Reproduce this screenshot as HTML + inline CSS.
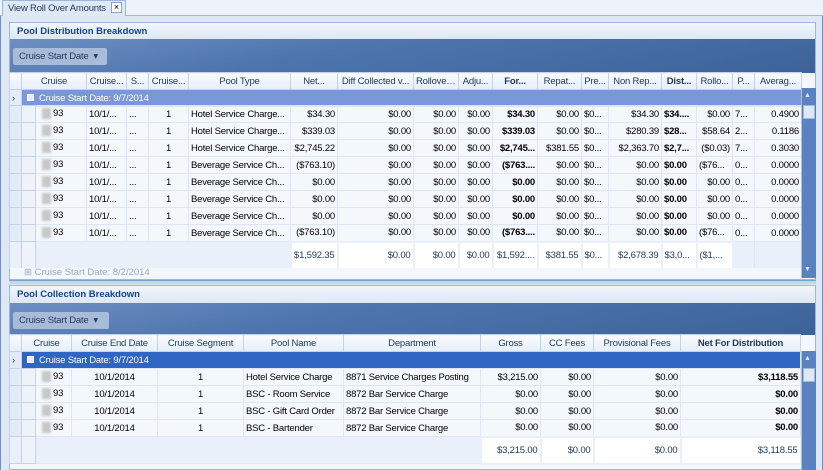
<!DOCTYPE html>
<html><head><meta charset="utf-8"><style>
*{box-sizing:border-box;margin:0;padding:0}
body{width:823px;height:470px;overflow:hidden;background:#fff;font-family:"Liberation Sans",sans-serif;font-size:9.5px;color:#000;position:relative}
.abs{position:absolute}
.tabbar{left:0;top:0;width:823px;height:16px;background:#eef3fa;border-bottom:1px solid #9fb7d9}
.tab{left:2px;top:0;width:124px;height:16px;background:#dfe8f5;border:1px solid #9fb7d9;border-bottom:none;font-size:9.5px;color:#1e395b;padding:2px 0 0 5px;white-space:nowrap;letter-spacing:-0.2px}
.x{left:111px;top:2px;width:11px;height:11px;border:1px solid #8aa3c6;background:#fff;font-size:9px;line-height:9px;text-align:center}
.frame{left:0;top:16px;width:823px;height:454px;background:#dfe8f6;border-left:1px solid #6d8fc5;border-right:1px solid #6d8fc5}
.phead{height:16px;background:linear-gradient(#f2f6fc,#dde7f5);font-weight:bold;color:#15428b;font-size:9.5px;padding:3px 0 0 7px}
.gpanel{background:linear-gradient(170deg,#6d8fc3 0%,#4d74ad 40%,#3c6299 100%)}
.gbtn{background:#a8bcd9;color:#1e395b;font-size:9.5px;border-radius:2px;padding:3px 6px;height:17px;white-space:nowrap;letter-spacing:-0.2px}
table{border-collapse:collapse;table-layout:fixed;position:absolute}
td{height:17px;border:1px solid #dce6f4;white-space:nowrap;overflow:hidden;text-overflow:ellipsis;padding:0 2px;font-size:9.5px;letter-spacing:-0.2px}
.hd td{background:linear-gradient(#fafcff,#e6eef9);border:1px solid #c4d3ea;color:#1e395b;text-align:center}
.r{text-align:right}.c{text-align:center}.b{font-weight:bold}
.ind{background:#e3ebf7;border-color:#c4d3ea}
.blur{display:inline-block;width:9px;height:11px;background:#c8c8c8;filter:blur(1px);vertical-align:middle;margin:0 2px 0 4px}
.sum td{height:27px;background:#e9f0fa}
.sum td.s{background:#fff;border:2px solid #e9f0fa;color:#1e395b}
.scroll{background:#5a82c0;border-left:1px solid #aebfd9}
.grp1{background:#7b97dc;color:#fff}
.grp2{background:#2f66c3;color:#fff}
.pm{display:inline-block;width:7px;height:7px;background:#e6ecf6;border:1px solid #fff;margin:0 5px 0 3px;vertical-align:middle}
</style></head><body>
<div class="abs tabbar"></div>
<div class="abs tab">View Roll Over Amounts</div>
<div class="abs x">×</div>
<div class="abs frame"></div>

<div class="abs" style="left:9px;top:22px;width:807px;height:258px;background:#f4f7fc;border:1px solid #9fb7d9">
 <div class="phead">Pool Distribution Breakdown</div>
 <div class="gpanel" style="height:34px;position:relative"><div class="gbtn abs" style="left:3px;top:9px;width:94px">Cruise Start Date &nbsp;▾</div></div>
</div>
<table style="left:9px;top:72px;width:792px">
<colgroup><col style="width:12px"><col style="width:65px"><col style="width:40px"><col style="width:22px"><col style="width:40px"><col style="width:102px"><col style="width:47px"><col style="width:76px"><col style="width:45px"><col style="width:34px"><col style="width:45px"><col style="width:44px"><col style="width:27px"><col style="width:53px"><col style="width:35px"><col style="width:36px"><col style="width:22px"><col style="width:47px"></colgroup>
<tr class="hd"><td></td><td>Cruise</td><td>Cruise...</td><td>S...</td><td>Cruise...</td><td>Pool Type</td><td class="r">Net...</td><td>Diff Collected v...</td><td>Rollover...</td><td>Adju...</td><td class="b">For...</td><td>Repat...</td><td>Pre...</td><td>Non Rep...</td><td class="b">Dist...</td><td>Rollo...</td><td>P...</td><td>Averag...</td></tr>
<tr><td class="ind" style="color:#333">›</td><td colspan="17" class="grp1"><span class="pm"></span>Cruise Start Date: 9/7/2014</td></tr>
</table>
<table style="left:9px;top:105px;width:792px">
<colgroup><col style="width:12px"><col style="width:14px"><col style="width:51px"><col style="width:40px"><col style="width:22px"><col style="width:40px"><col style="width:102px"><col style="width:47px"><col style="width:76px"><col style="width:45px"><col style="width:34px"><col style="width:45px"><col style="width:44px"><col style="width:27px"><col style="width:53px"><col style="width:35px"><col style="width:36px"><col style="width:22px"><col style="width:47px"></colgroup>
<tr><td class="ind"></td><td class="ind" style="background:#eef3fa"></td><td><span class="blur"></span>93</td><td>10/1/...</td><td>...</td><td class="c">1</td><td>Hotel Service Charge...</td><td class="r">$34.30</td><td class="r">$0.00</td><td class="r">$0.00</td><td class="r">$0.00</td><td class="r b">$34.30</td><td class="r">$0.00</td><td>$0...</td><td class="r">$34.30</td><td class="b">$34....</td><td class="r">$0.00</td><td>7...</td><td class="r">0.4900</td></tr>
<tr><td class="ind"></td><td class="ind" style="background:#eef3fa"></td><td><span class="blur"></span>93</td><td>10/1/...</td><td>...</td><td class="c">1</td><td>Hotel Service Charge...</td><td class="r">$339.03</td><td class="r">$0.00</td><td class="r">$0.00</td><td class="r">$0.00</td><td class="r b">$339.03</td><td class="r">$0.00</td><td>$0...</td><td class="r">$280.39</td><td class="b">$28...</td><td class="r">$58.64</td><td>2...</td><td class="r">0.1186</td></tr>
<tr><td class="ind"></td><td class="ind" style="background:#eef3fa"></td><td><span class="blur"></span>93</td><td>10/1/...</td><td>...</td><td class="c">1</td><td>Hotel Service Charge...</td><td class="r">$2,745.22</td><td class="r">$0.00</td><td class="r">$0.00</td><td class="r">$0.00</td><td class="r b">$2,745...</td><td class="r">$381.55</td><td>$0...</td><td class="r">$2,363.70</td><td class="b">$2,7...</td><td class="r">($0.03)</td><td>7...</td><td class="r">0.3030</td></tr>
<tr><td class="ind"></td><td class="ind" style="background:#eef3fa"></td><td><span class="blur"></span>93</td><td>10/1/...</td><td>...</td><td class="c">1</td><td>Beverage Service Ch...</td><td class="r">($763.10)</td><td class="r">$0.00</td><td class="r">$0.00</td><td class="r">$0.00</td><td class="r b">($763....</td><td class="r">$0.00</td><td>$0...</td><td class="r">$0.00</td><td class="b">$0.00</td><td>($76...</td><td>0...</td><td class="r">0.0000</td></tr>
<tr><td class="ind"></td><td class="ind" style="background:#eef3fa"></td><td><span class="blur"></span>93</td><td>10/1/...</td><td>...</td><td class="c">1</td><td>Beverage Service Ch...</td><td class="r">$0.00</td><td class="r">$0.00</td><td class="r">$0.00</td><td class="r">$0.00</td><td class="r b">$0.00</td><td class="r">$0.00</td><td>$0...</td><td class="r">$0.00</td><td class="b">$0.00</td><td class="r">$0.00</td><td>0...</td><td class="r">0.0000</td></tr>
<tr><td class="ind"></td><td class="ind" style="background:#eef3fa"></td><td><span class="blur"></span>93</td><td>10/1/...</td><td>...</td><td class="c">1</td><td>Beverage Service Ch...</td><td class="r">$0.00</td><td class="r">$0.00</td><td class="r">$0.00</td><td class="r">$0.00</td><td class="r b">$0.00</td><td class="r">$0.00</td><td>$0...</td><td class="r">$0.00</td><td class="b">$0.00</td><td class="r">$0.00</td><td>0...</td><td class="r">0.0000</td></tr>
<tr><td class="ind"></td><td class="ind" style="background:#eef3fa"></td><td><span class="blur"></span>93</td><td>10/1/...</td><td>...</td><td class="c">1</td><td>Beverage Service Ch...</td><td class="r">$0.00</td><td class="r">$0.00</td><td class="r">$0.00</td><td class="r">$0.00</td><td class="r b">$0.00</td><td class="r">$0.00</td><td>$0...</td><td class="r">$0.00</td><td class="b">$0.00</td><td class="r">$0.00</td><td>0...</td><td class="r">0.0000</td></tr>
<tr><td class="ind"></td><td class="ind" style="background:#eef3fa"></td><td><span class="blur"></span>93</td><td>10/1/...</td><td>...</td><td class="c">1</td><td>Beverage Service Ch...</td><td class="r">($763.10)</td><td class="r">$0.00</td><td class="r">$0.00</td><td class="r">$0.00</td><td class="r b">($763....</td><td class="r">$0.00</td><td>$0...</td><td class="r">$0.00</td><td class="b">$0.00</td><td>($76...</td><td>0...</td><td class="r">0.0000</td></tr>
<tr class="sum"><td class="ind"></td><td class="ind" style="background:#eef3fa"></td><td colspan="5"></td><td class="s r">$1,592.35</td><td class="s r">$0.00</td><td class="s r">$0.00</td><td class="s r">$0.00</td><td class="s r">$1,592....</td><td class="s r">$381.55</td><td class="s">$0...</td><td class="s r">$2,678.39</td><td class="s">$3,0...</td><td class="s">($1,...</td><td></td><td></td></tr>
</table>
<div class="abs" style="left:10px;top:268px;width:791px;height:10px;background:#f4f7fc;color:#9aa8bb;font-size:9.5px;line-height:10px;overflow:hidden;padding-left:14px">⊞ Cruise Start Date: 8/2/2014</div>
<div class="abs scroll" style="left:801px;top:88px;width:15px;height:190px">
 <div class="abs" style="left:2px;top:4px;color:#dfe8f5;font-size:7px">▲</div>
 <div class="abs" style="left:1px;top:17px;width:12px;height:14px;background:#dfe8f5;border:1px solid #9fb7d9"></div>
 <div class="abs" style="left:2px;top:178px;color:#dfe8f5;font-size:7px">▼</div>
</div>
<div class="abs" style="left:9px;top:280px;width:807px;height:4px;background:#c5d5ec;border-top:1px solid #7f9fd0"></div>

<div class="abs" style="left:9px;top:285px;width:807px;height:185px;background:#f4f7fc;border:1px solid #9fb7d9">
 <div class="phead" style="height:17px">Pool Collection Breakdown</div>
 <div class="gpanel" style="height:32px;position:relative"><div class="gbtn abs" style="left:3px;top:9px;width:96px">Cruise Start Date &nbsp;▾</div></div>
</div>
<table style="left:9px;top:334px;width:791px">
<colgroup><col style="width:12px"><col style="width:50px"><col style="width:86px"><col style="width:86px"><col style="width:100px"><col style="width:137px"><col style="width:60px"><col style="width:53px"><col style="width:87px"><col style="width:120px"></colgroup>
<tr class="hd"><td></td><td>Cruise</td><td>Cruise End Date</td><td>Cruise Segment</td><td>Pool Name</td><td>Department</td><td>Gross</td><td>CC Fees</td><td>Provisional Fees</td><td class="b">Net For Distribution</td></tr>
<tr><td class="ind" style="color:#333">›</td><td colspan="9" class="grp2"><span class="pm"></span>Cruise Start Date: 9/7/2014</td></tr>
</table>
<table style="left:9px;top:368px;width:791px">
<colgroup><col style="width:12px"><col style="width:14px"><col style="width:36px"><col style="width:86px"><col style="width:86px"><col style="width:100px"><col style="width:137px"><col style="width:60px"><col style="width:53px"><col style="width:87px"><col style="width:120px"></colgroup>
<tr><td class="ind"></td><td class="ind" style="background:#eef3fa"></td><td><span class="blur"></span>93</td><td class="c">10/1/2014</td><td class="c">1</td><td>Hotel Service Charge</td><td>8871 Service Charges Posting</td><td class="r">$3,215.00</td><td class="r">$0.00</td><td class="r">$0.00</td><td class="r b">$3,118.55</td></tr>
<tr><td class="ind"></td><td class="ind" style="background:#eef3fa"></td><td><span class="blur"></span>93</td><td class="c">10/1/2014</td><td class="c">1</td><td>BSC - Room Service</td><td>8872 Bar Service Charge</td><td class="r">$0.00</td><td class="r">$0.00</td><td class="r">$0.00</td><td class="r b">$0.00</td></tr>
<tr><td class="ind"></td><td class="ind" style="background:#eef3fa"></td><td><span class="blur"></span>93</td><td class="c">10/1/2014</td><td class="c">1</td><td>BSC - Gift Card Order</td><td>8872 Bar Service Charge</td><td class="r">$0.00</td><td class="r">$0.00</td><td class="r">$0.00</td><td class="r b">$0.00</td></tr>
<tr><td class="ind"></td><td class="ind" style="background:#eef3fa"></td><td><span class="blur"></span>93</td><td class="c">10/1/2014</td><td class="c">1</td><td>BSC - Bartender</td><td>8872 Bar Service Charge</td><td class="r">$0.00</td><td class="r">$0.00</td><td class="r">$0.00</td><td class="r b">$0.00</td></tr>
<tr class="sum"><td class="ind"></td><td class="ind" style="background:#eef3fa"></td><td colspan="5"></td><td class="s r">$3,215.00</td><td class="s r">$0.00</td><td class="s r">$0.00</td><td class="s r">$3,118.55</td></tr>
</table>
<div class="abs scroll" style="left:801px;top:351px;width:15px;height:119px">
 <div class="abs" style="left:2px;top:4px;color:#dfe8f5;font-size:7px">▲</div>
 <div class="abs" style="left:1px;top:17px;width:12px;height:14px;background:#dfe8f5;border:1px solid #9fb7d9"></div>
</div>
</body></html>
